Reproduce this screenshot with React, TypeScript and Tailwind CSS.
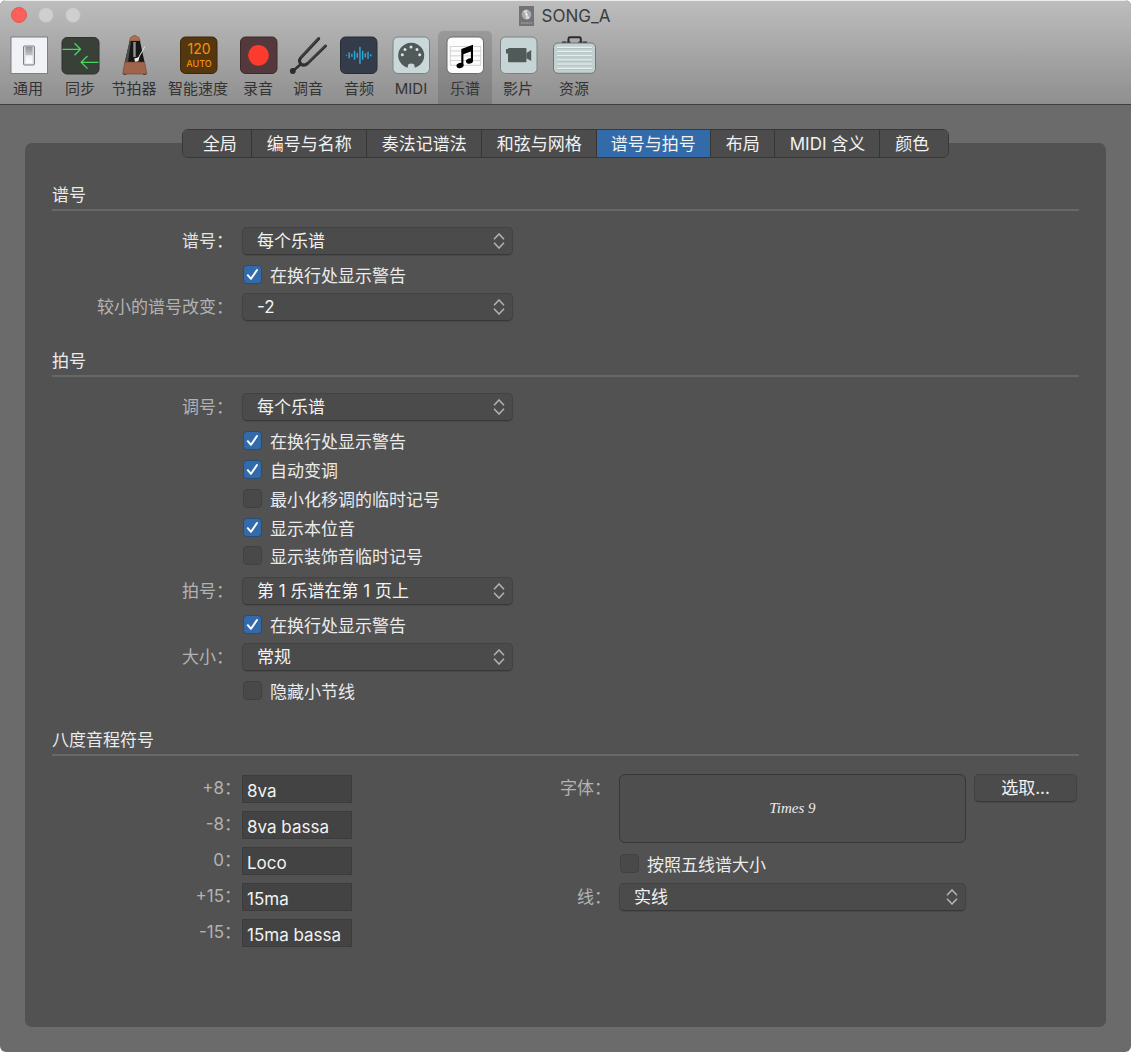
import { useId, useState, type ReactNode } from "react";

const SANS = "font-['Inter','Noto_Sans_CJK_SC',sans-serif]";

function Icon({ children }: { children: ReactNode }) {
  return (
    <svg width="44" height="40" viewBox="0 0 44 40" className="shrink-0" aria-hidden="true">
      {children}
    </svg>
  );
}

const GeneralIcon = () => (
  <Icon>
    <defs>
      <linearGradient id="sw" x1="0" y1="0" x2="0" y2="1">
        <stop offset="0" stopColor="#8f9498" />
        <stop offset="0.5" stopColor="#c3c7ca" />
        <stop offset="0.52" stopColor="#eef0f2" />
        <stop offset="1" stopColor="#ffffff" />
      </linearGradient>
    </defs>
    <rect x="5" y="2" width="36.5" height="36.5" fill="#f1f2f5" stroke="#7d7f83" strokeWidth="1" />
    <rect x="17.5" y="11" width="11" height="19" rx="1" fill="#d9dbde" stroke="#7b7f83" strokeWidth="1" />
    <rect x="19.5" y="12" width="7" height="16.5" fill="url(#sw)" />
  </Icon>
);

const SyncIcon = () => (
  <Icon>
    <rect x="4" y="2.5" width="37" height="36.5" rx="5" fill="#384038" stroke="#2c332d" />
    <g fill="none" stroke="#46d75f" strokeWidth="1.3">
      <path d="M4.5 14.3H22.5M16.5 8.3l6 6-6 6" />
      <path d="M40.5 27.3H23M29.5 21l-6.3 6.3 6.3 6.3" />
    </g>
  </Icon>
);

const MetronomeIcon = () => (
  <Icon>
    <path d="M17.5 6l1-3.5L22.5 0l4.500 2.500L28.200 6z" fill="#a9714f" stroke="#6d4632" strokeWidth=".5" />
    <path d="M17.700 6H28L32.500 27H12.800z" fill="#161616" />
    <path d="M17.700 6h1.300L16 27h-3.200z" fill="#4d4d4d" />
    <path d="M12.800 27H32.600L34.800 39H10.700z" fill="#a0644a" stroke="#6b4131" strokeWidth=".6" />
    <path d="M11.500 39h3v1.500h-3zM31 39h3v1.500h-3z" fill="#5e3c2e" />
    <rect x="21.300" y="7" width="2.400" height="15" fill="#8d9591" />
    <path d="M33 11.300L24.500 26" stroke="#e6e6e6" strokeWidth="1" />
    <path d="M22.300 23.500l5.200-1.500-1.200 4.200-3.300.6z" fill="#ededed" />
  </Icon>
);

const TempoIcon = () => (
  <Icon>
    <rect x="4.500" y="2" width="36.500" height="36.500" rx="5" fill="#54370f" stroke="#3c270b" />
    <text x="23" y="19" textAnchor="middle" fill="#f79009" fontSize="14" className="font-['Inter',sans-serif]">120</text>
    <text x="23" y="31.500" textAnchor="middle" fill="#f79009" fontSize="9" fontWeight="500" className="font-['Inter',sans-serif]">AUTO</text>
  </Icon>
);

const RecordIcon = () => (
  <Icon>
    <rect x="4.500" y="2" width="36.500" height="36.500" rx="5" fill="#54393c" stroke="#3d2a2c" />
    <circle cx="22.500" cy="20.300" r="10.400" fill="#fc3a2d" />
  </Icon>
);

const ForkIcon = () => (
  <Icon>
    <g fill="none" stroke="#2f2f2f" strokeLinecap="round">
      <path d="M32.700 3.600L15 22.500Q12 26 15 29Q18 31.500 21.500 28.500L39.500 11" strokeWidth="3" />
      <path d="M15 29L7 36" strokeWidth="2.500" />
    </g>
    <path d="M32.300 3.300L14.500 22.500M39.200 10.700L21.500 27.600" stroke="#636363" strokeWidth=".7" />
    <circle cx="6.800" cy="36" r="2.900" fill="#2c2c2c" />
  </Icon>
);

const WAVE = [1, 6, 3, 9, 5, 17, 9, 4, 7, 2];
const AudioIcon = () => (
  <Icon>
    <rect x="3.500" y="2" width="36.500" height="36.500" rx="5" fill="#343c4a" stroke="#272d38" />
    {WAVE.map((h, i) => (
      <rect key={i} x={8.7 + i * 2.7} y={20.3 - h / 2} width="1.500" height={h} fill="#2ba6d4" />
    ))}
  </Icon>
);

const MidiIcon = () => (
  <Icon>
    <rect x="4" y="2" width="36.500" height="36.500" rx="5" fill="#cbd8d9" stroke="#7b8282" />
    <path d="M18.600 32.800A13 12.800 0 1 1 25.800 32.800L25.200 29.500Q22.200 27.600 19.200 29.500z" fill="#505a58" />
    <g fill="#dbe6e6">
      <circle cx="13.300" cy="19.700" r="1.500" />
      <circle cx="16" cy="14.500" r="1.500" />
      <circle cx="22" cy="12" r="1.500" />
      <circle cx="28" cy="14.500" r="1.500" />
      <circle cx="30.700" cy="19.700" r="1.500" />
    </g>
  </Icon>
);

const ScoreIcon = () => (
  <Icon>
    <rect x="4" y="2" width="36.500" height="36.500" rx="5" fill="#fcfcfc" stroke="#6b6b6b" />
    <path d="M7 11.500H38M7 16H38M7 20.800H38M7 25.500H38M7 30.300H38M7.300 11.500V30.300M37.700 11.500V30.300" stroke="#c8c8c8" strokeWidth=".8" />
    <path d="M18.300 14L30 9.800V26H27.900V16.500L20.400 19.300V30.500H18.300z" fill="#000" />
    <ellipse cx="17" cy="30.500" rx="3.600" ry="2.600" transform="rotate(-18 17 30.500)" />
    <ellipse cx="26.500" cy="26" rx="3.600" ry="2.600" transform="rotate(-18 26.500 26)" />
  </Icon>
);

const MovieIcon = () => (
  <Icon>
    <rect x="4.500" y="2" width="36.500" height="36.500" rx="5" fill="#c6d4d5" stroke="#7b8282" />
    <rect x="12" y="13" width="18.500" height="14.300" rx="1" fill="#505a58" />
    <path d="M10 14h2.500v4.500H10zM30.500 18L35.200 15v11l-4.700-2.800z" fill="#505a58" />
  </Icon>
);

const CaseIcon = () => (
  <Icon>
    <path d="M16.500 8V3.700Q16.500 2.300 18 2.300H27.300Q28.800 2.300 28.800 3.700V8" fill="none" stroke="#2b2b2b" strokeWidth="2" />
    <path d="M10 7.300h4M31 7.300h4M14.500 7.300h4M26.500 7.300h4" stroke="#2b2b2b" strokeWidth="1.500" />
    <rect x="1.500" y="8" width="42" height="30.300" rx="4.500" fill="#c3d0d0" stroke="#6d7676" />
    <path d="M5 12.300H40M5 16.500H40M5 20.700H40M5 24.900H40M5 29.100H40M5 33.300H40" stroke="#e6eeee" strokeWidth="1.300" />
    <path d="M5 13.500H40M5 17.700H40M5 21.900H40M5 26.100H40M5 30.300H40M5 34.500H40" stroke="#afbcbc" strokeWidth=".7" />
  </Icon>
);

const TOOLS = [
  { name: "通用", icon: <GeneralIcon />, width: "w-[52px]" },
  { name: "同步", icon: <SyncIcon />, width: "w-[52px]" },
  { name: "节拍器", icon: <MetronomeIcon />, width: "w-[56px]" },
  { name: "智能速度", icon: <TempoIcon />, width: "w-[72px]" },
  { name: "录音", icon: <RecordIcon />, width: "w-[48px]" },
  { name: "调音", icon: <ForkIcon />, width: "w-[52px]" },
  { name: "音频", icon: <AudioIcon />, width: "w-[50px]" },
  { name: "MIDI", icon: <MidiIcon />, width: "w-[54px]" },
  { name: "乐谱", icon: <ScoreIcon />, width: "w-[54px]" },
  { name: "影片", icon: <MovieIcon />, width: "w-[52px]" },
  { name: "资源", icon: <CaseIcon />, width: "w-[60px]" },
];

const TABS = ["全局", "编号与名称", "奏法记谱法", "和弦与网格", "谱号与拍号", "布局", "MIDI 含义", "颜色"];

function TitleBar() {
  return (
    <div className="relative flex h-[30px] items-center justify-center gap-2 pr-[2px]">
      <div className="absolute left-[11px] top-[6px] flex gap-[11px]">
        <button aria-label="关闭" className="size-4 rounded-full border border-[#e9554f] bg-[#fc605b]" />
        <button aria-label="最小化" className="size-4 rounded-full border border-[#bcbcbc] bg-[#cfcfcf]" />
        <button aria-label="缩放" className="size-4 rounded-full border border-[#bcbcbc] bg-[#cfcfcf]" />
      </div>
      <svg width="15" height="20" viewBox="0 0 15 20" aria-hidden="true">
        <rect width="15" height="20" fill="#737373" />
        <circle cx="7.500" cy="8.500" r="4.800" fill="#a9adb0" />
        <path d="M7.500 8.500L4 5.200A4.800 4.800 0 0 1 8.500 3.800zM7.500 8.500L11 11.800A4.800 4.800 0 0 1 6.500 13.200z" fill="#d3d8da" />
        <circle cx="7.500" cy="8.500" r="1.200" fill="#eceff0" />
        <path d="M2 17h11" stroke="#a8a8a8" strokeDasharray="2 .5" />
      </svg>
      <h1 className="text-[17px] leading-6 text-[#3c3c3c]">SONG_A</h1>
    </div>
  );
}

function Toolbar({ active, onPick }: { active: string; onPick: (n: string) => void }) {
  return (
    <nav className="flex pl-[2px]">
      {TOOLS.map((t) => (
        <button
          key={t.name}
          onClick={() => onPick(t.name)}
          className={`flex h-[73px] shrink-0 flex-col items-center rounded-t-[5px] pt-1 ${t.width} ${
            active === t.name ? "bg-black/12" : ""
          }`}
        >
          {t.icon}
          <span className="mt-1 whitespace-nowrap text-[15px] leading-5 text-[#333]">{t.name}</span>
        </button>
      ))}
    </nav>
  );
}

function Heading({ children }: { children: ReactNode }) {
  return (
    <h2 className="flex h-[29px] items-center border-b-2 border-[#686868] pt-px text-[17px] text-[#ebebeb]">{children}</h2>
  );
}

function SelectBox({ id, value, className }: { id: string; value: string; className: string }) {
  return (
    <div className={`relative ${className}`}>
      <select
        id={id}
        className="block h-7 w-full appearance-none rounded-[5px] border border-[#424242] border-b-[#383838] bg-[#4b4b4b] pl-[14px] pr-8 text-[17px] leading-6 text-[#f2f2f2] shadow-[0_1px_1px_rgba(0,0,0,0.12)]"
      >
        <option>{value}</option>
      </select>
      <svg
        width="12"
        height="16"
        viewBox="0 0 12 16"
        className="pointer-events-none absolute right-2 top-[6px]"
        fill="none"
        stroke="#b4b4b4"
        strokeWidth="1.500"
        aria-hidden="true"
      >
        <path d="M1 6.300L6 1l5 5.300M1 9.700L6 15l5-5.300" />
      </svg>
    </div>
  );
}

function SelectRow({ label, value, bright }: { label: string; value: string; bright?: boolean }) {
  const id = useId();
  return (
    <div className="flex items-center">
      <label
        htmlFor={id}
        className={`w-[181px] shrink-0 text-right text-[17px] leading-7 ${bright ? "text-[#e4e4e4]" : "text-[#b2b2b2]"}`}
      >
        {label}：
      </label>
      <SelectBox id={id} value={value} className="ml-[9px] w-[271px]" />
    </div>
  );
}

function Check({ label, checked, className }: { label: string; checked?: boolean; className: string }) {
  return (
    <label className={`flex items-center gap-2 text-[17px] leading-6 text-[#ebebeb] ${className}`}>
      <span className="relative size-[19px] shrink-0">
        <input
          type="checkbox"
          defaultChecked={checked}
          className="peer block size-[19px] appearance-none rounded-[4px] border border-[#414141] bg-[#494949] checked:border-[#284d79] checked:bg-[#336aa9]"
        />
        <svg
          width="19"
          height="19"
          viewBox="0 0 19 19"
          className="pointer-events-none absolute inset-0 hidden peer-checked:block"
          fill="none"
          stroke="#fff"
          strokeWidth="2"
          strokeLinecap="round"
          strokeLinejoin="round"
          aria-hidden="true"
        >
          <path d="M4.800 10.200L8 13.800L14 5" />
        </svg>
      </span>
      <span className="pt-[3px]">{label}</span>
    </label>
  );
}

const OCTAVES = [
  ["+8", "8va"],
  ["-8", "8va bassa"],
  ["0", "Loco"],
  ["+15", "15ma"],
  ["-15", "15ma bassa"],
];

function OctaveField({ label, value }: { label: string; value: string }) {
  const id = useId();
  return (
    <div className="flex">
      <label htmlFor={id} className="w-[190px] shrink-0 pr-px text-right text-[17px] leading-[26px] text-[#b2b2b2]">
        {label}：
      </label>
      <input
        id={id}
        defaultValue={value}
        className="h-7 w-[110px] border border-[#3c3c3c] bg-[#434343] pl-1 pt-[3px] text-[17px] leading-6 text-[#f2f2f2]"
      />
    </div>
  );
}

export default function App() {
  const [tool, setTool] = useState("乐谱");
  const [tab, setTab] = useState("谱号与拍号");
  const lineId = useId();

  return (
    <div className={`flex min-h-screen flex-col bg-white pb-px ${SANS}`}>
      <main className="flex grow flex-col overflow-hidden rounded-[6px] bg-[#6b6b6b]">
        <header className="border-b border-t border-b-[#3f3f3f] border-t-[#ececec] bg-linear-to-b from-[#bdbdbd] to-[#8f8f8f]">
          <TitleBar />
          <Toolbar active={tool} onPick={setTool} />
        </header>

        <div role="tablist" className="z-10 mt-6 -mb-[15px] flex h-[29px] self-center overflow-hidden rounded-[6px] border border-[#383838]">
          {TABS.map((t) => (
            <button
              key={t}
              role="tab"
              aria-selected={t === tab}
              onClick={() => setTab(t)}
              className={`whitespace-nowrap border-r border-[#353535] text-[17px] leading-6 text-[#f2f2f2] first:pl-5 last:border-r-0 last:pr-[19px] ${
                t === tab ? "bg-[#336aa9] px-[14px]" : "bg-[#4c4c4c] pl-[15px] pr-[14px]"
              }`}
            >
              {t}
            </button>
          ))}
        </div>

        <div className="mx-[25px] mb-[25px] grow rounded-[7px] bg-[#525252] px-[27px] pt-[39px]">
          <section>
            <Heading>谱号</Heading>
            <div className="mt-4">
              <SelectRow label="谱号" value="每个乐谱" bright />
              <Check label="在换行处显示警告" checked className="ml-[191px] h-[38px]" />
              <SelectRow label="较小的谱号改变" value="-2" />
            </div>
          </section>

          <section className="mt-[27px]">
            <Heading>拍号</Heading>
            <div className="mt-4">
              <SelectRow label="调号" value="每个乐谱" />
              <div className="ml-[191px] mt-[5px] mb-2">
                <Check label="在换行处显示警告" checked className="h-[29px]" />
                <Check label="自动变调" checked className="h-[29px]" />
                <Check label="最小化移调的临时记号" className="h-[29px]" />
                <Check label="显示本位音" checked className="h-[29px]" />
                <Check label="显示装饰音临时记号" className="h-[27px]" />
              </div>
              <SelectRow label="拍号" value="第 1 乐谱在第 1 页上" />
              <Check label="在换行处显示警告" checked className="ml-[191px] h-[38px]" />
              <SelectRow label="大小" value="常规" />
              <Check label="隐藏小节线" className="ml-[191px] h-[38px]" />
            </div>
          </section>

          <section className="mt-[18px]">
            <Heading>八度音程符号</Heading>
            <div className="mt-[18px] flex">
              <div className="flex flex-col gap-2 pt-px">
                {OCTAVES.map(([label, value]) => (
                  <OctaveField key={label} label={label} value={value} />
                ))}
              </div>
              <div className="ml-[208px] mr-[2px] grid grow grid-cols-[51px_1fr_103px] content-start gap-x-2">
                <span className="text-right text-[17px] leading-7 text-[#b2b2b2]">字体：</span>
                <div className="flex h-[69px] items-center justify-center rounded-[6px] border border-[#373737] bg-[#4e4e4e] font-['Liberation_Serif',serif] text-[15px] italic text-[#ececec]">
                  Times 9
                </div>
                <button className="h-7 rounded-[5px] border border-[#424242] border-b-[#383838] bg-[#4b4b4b] text-[17px] leading-6 text-[#f2f2f2] shadow-[0_1px_1px_rgba(0,0,0,0.12)]">
                  选取...
                </button>
                <Check label="按照五线谱大小" className="col-start-2 ml-px h-10" />
                <label htmlFor={lineId} className="col-start-1 text-right text-[17px] leading-7 text-[#b2b2b2]">
                  线：
                </label>
                <SelectBox id={lineId} value="实线" className="w-full" />
              </div>
            </div>
          </section>
        </div>
      </main>
    </div>
  );
}
